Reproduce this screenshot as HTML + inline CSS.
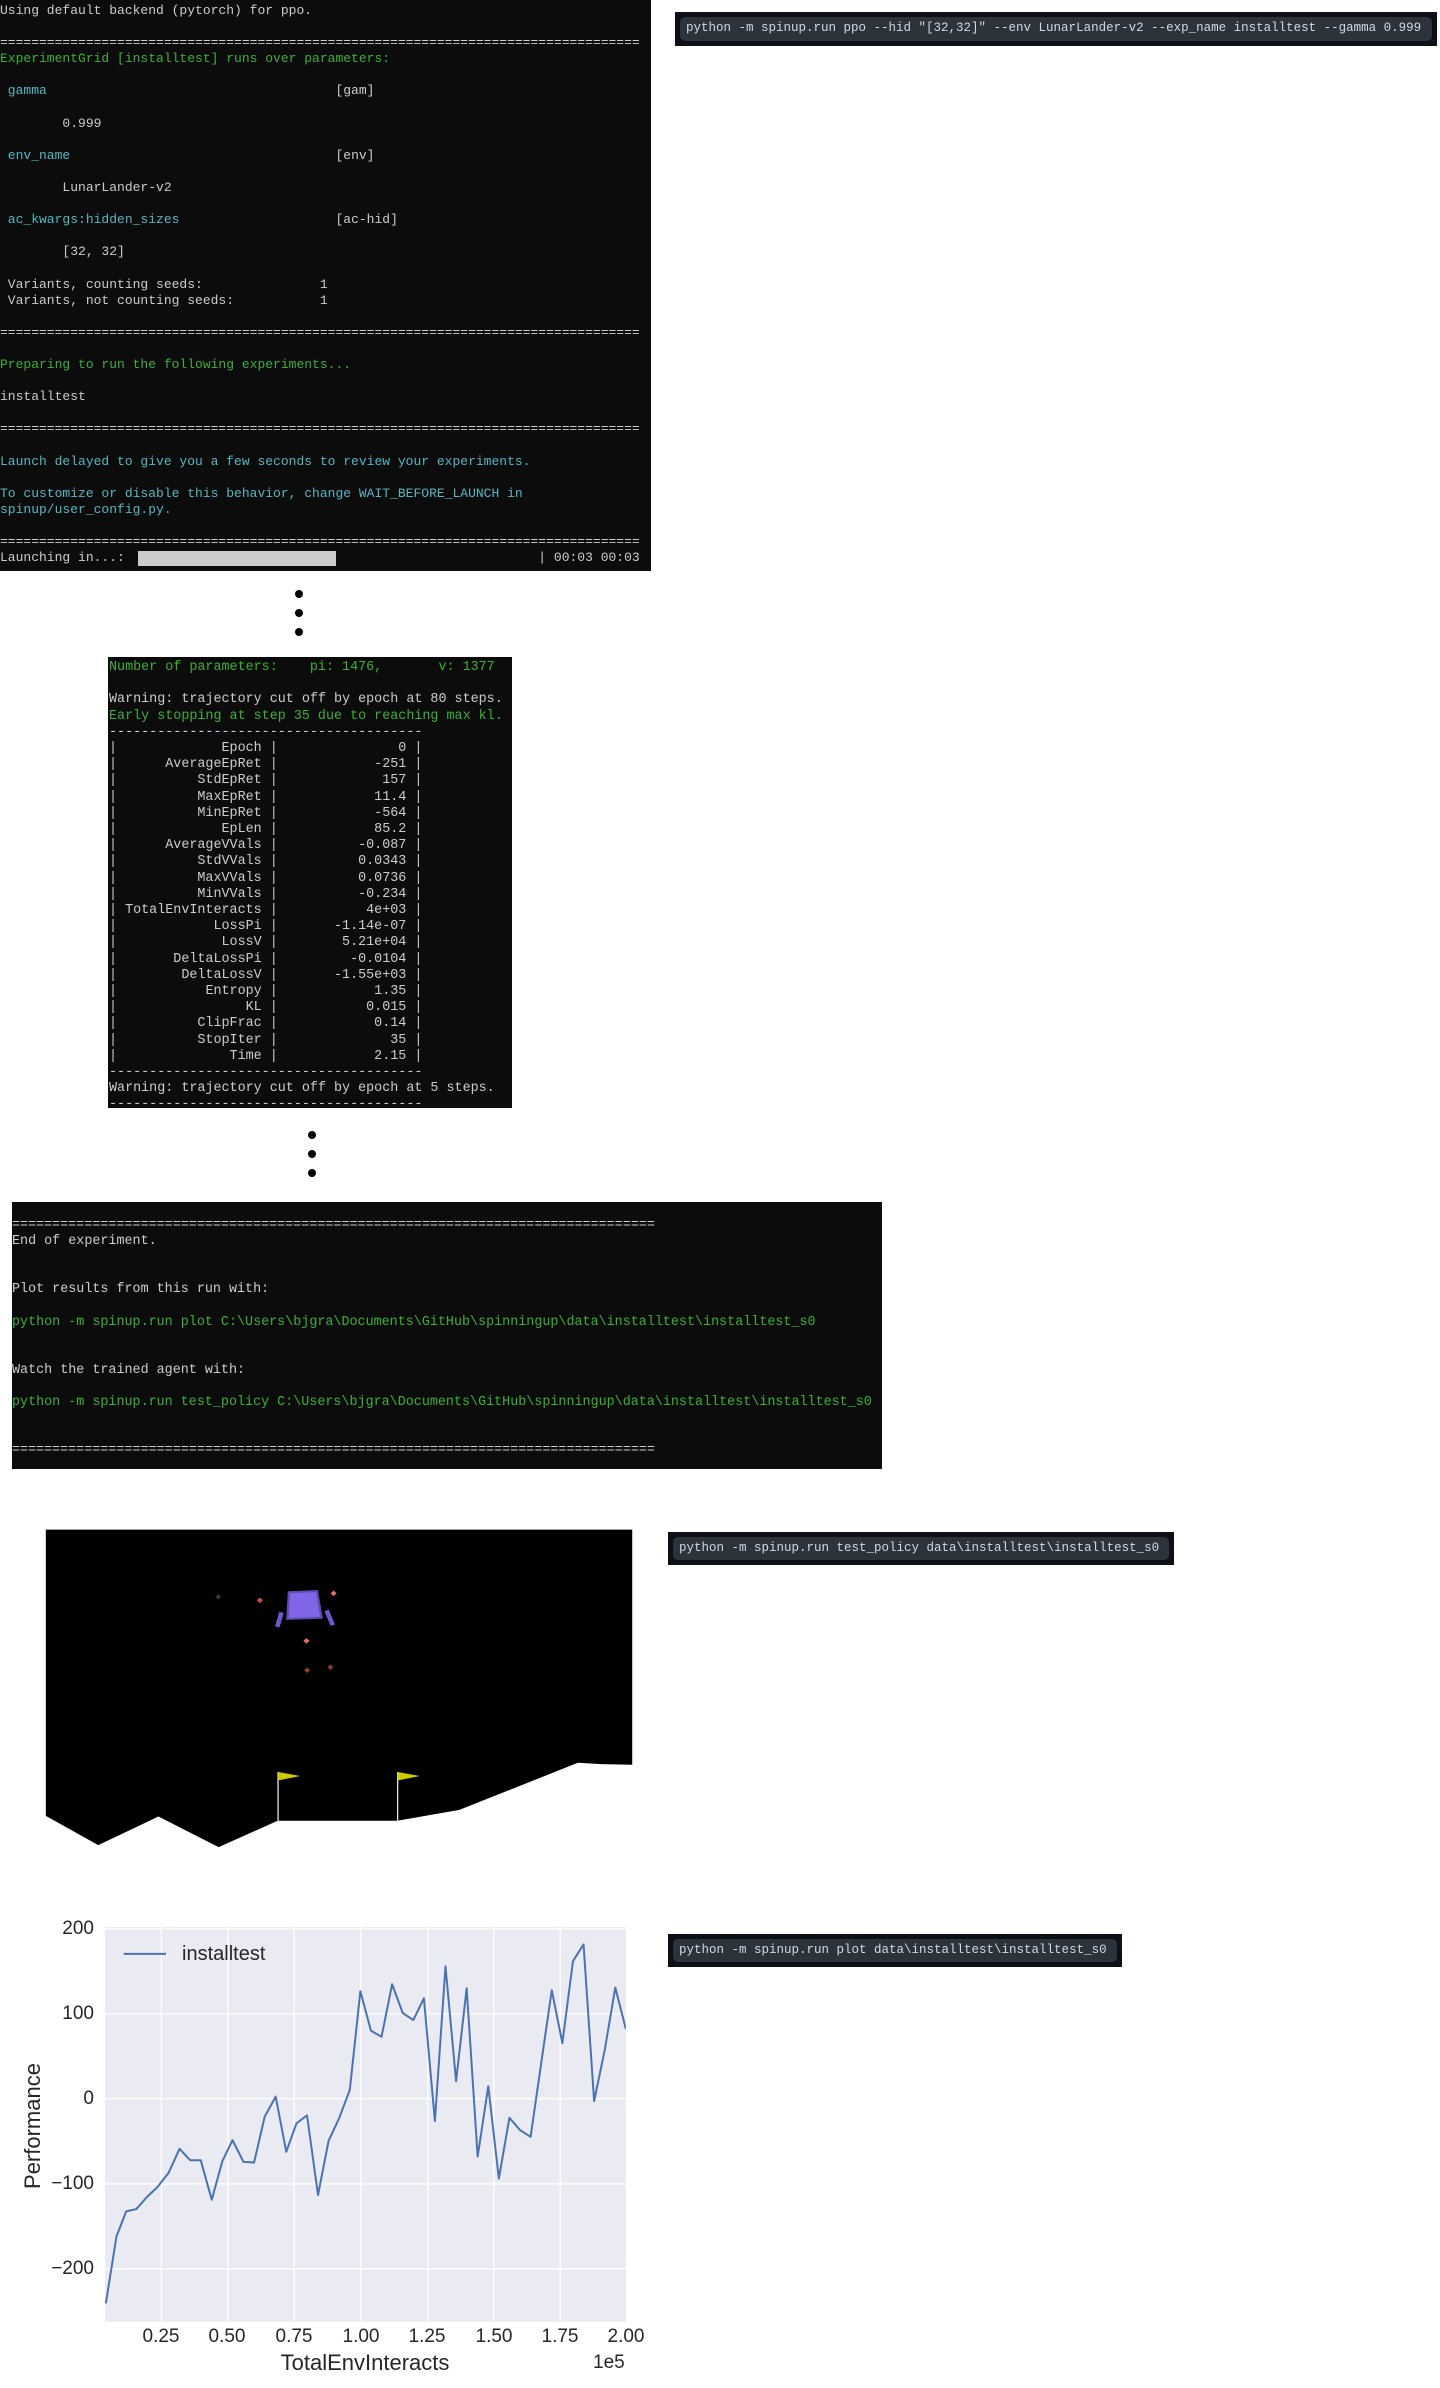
<!DOCTYPE html>
<html><head><meta charset="utf-8">
<style>
*{margin:0;padding:0;box-sizing:border-box}
body{width:1440px;height:2376px;background:#fff;position:relative;overflow:hidden;font-family:"Liberation Mono",monospace}
.term{position:absolute;background:#0c0c0c;color:#cccccc;white-space:pre;font-family:"Liberation Mono",monospace}
.g{color:#3fae3a}.c{color:#56b6c2}
.cmd{position:absolute;background:#0d1117}
.cmd div{position:absolute;left:5px;right:5px;top:5px;bottom:5px;background:#2d333b;border-radius:5px;color:#cdd9e5;font-size:12.5px;line-height:22px;padding-left:6px;white-space:pre}
.dot{position:absolute;width:8px;height:8px;border-radius:50%;background:#000}
.k{display:inline-block;width:18ch;text-align:right}
.v{display:inline-block;width:16ch;text-align:right}
.pt{position:absolute;font-family:"Liberation Sans",sans-serif;color:#262626;font-size:19px;line-height:1}
</style></head><body>

<div class="term" style="left:0;top:0;width:651px;height:571px;font-size:13px;line-height:16.1px;padding-top:3px">Using default backend (pytorch) for ppo.

==================================================================================
<span class="g">ExperimentGrid [installtest] runs over parameters:</span>

<span class="c"> gamma</span>                                     [gam]

        0.999

<span class="c"> env_name</span>                                  [env]

        LunarLander-v2

<span class="c"> ac_kwargs:hidden_sizes</span>                    [ac-hid]

        [32, 32]

 Variants, counting seeds:               1
 Variants, not counting seeds:           1

==================================================================================

<span class="g">Preparing to run the following experiments...</span>

installtest

==================================================================================

<span class="c">Launch delayed to give you a few seconds to review your experiments.</span>

<span class="c">To customize or disable this behavior, change WAIT_BEFORE_LAUNCH in</span>
<span class="c">spinup/user_config.py.</span>

==================================================================================
Launching in...:                                                     | 00:03 00:03</div>
<div style="position:absolute;left:138px;top:551px;width:198px;height:15px;background:#cccccc"></div>

<div class="cmd" style="left:675px;top:12px;width:762px;height:34px"><div>python -m spinup.run ppo --hid "[32,32]" --env LunarLander-v2 --exp_name installtest --gamma 0.999</div></div>

<div class="dot" style="left:295px;top:590px"></div>
<div class="dot" style="left:295px;top:609px"></div>
<div class="dot" style="left:295px;top:628px"></div>

<div class="term" style="left:108px;top:657px;width:404px;height:451px;font-size:13.4px;line-height:16.2px;padding-top:3px;padding-left:1px"><span class="g">Number of parameters:    pi: 1476,       v: 1377</span>

Warning: trajectory cut off by epoch at 80 steps.
<span class="g">Early stopping at step 35 due to reaching max kl.</span>
---------------------------------------
|<span class="k">Epoch</span> |<span class="v">0</span> |
|<span class="k">AverageEpRet</span> |<span class="v">-251</span> |
|<span class="k">StdEpRet</span> |<span class="v">157</span> |
|<span class="k">MaxEpRet</span> |<span class="v">11.4</span> |
|<span class="k">MinEpRet</span> |<span class="v">-564</span> |
|<span class="k">EpLen</span> |<span class="v">85.2</span> |
|<span class="k">AverageVVals</span> |<span class="v">-0.087</span> |
|<span class="k">StdVVals</span> |<span class="v">0.0343</span> |
|<span class="k">MaxVVals</span> |<span class="v">0.0736</span> |
|<span class="k">MinVVals</span> |<span class="v">-0.234</span> |
|<span class="k">TotalEnvInteracts</span> |<span class="v">4e+03</span> |
|<span class="k">LossPi</span> |<span class="v">-1.14e-07</span> |
|<span class="k">LossV</span> |<span class="v">5.21e+04</span> |
|<span class="k">DeltaLossPi</span> |<span class="v">-0.0104</span> |
|<span class="k">DeltaLossV</span> |<span class="v">-1.55e+03</span> |
|<span class="k">Entropy</span> |<span class="v">1.35</span> |
|<span class="k">KL</span> |<span class="v">0.015</span> |
|<span class="k">ClipFrac</span> |<span class="v">0.14</span> |
|<span class="k">StopIter</span> |<span class="v">35</span> |
|<span class="k">Time</span> |<span class="v">2.15</span> |
---------------------------------------
Warning: trajectory cut off by epoch at 5 steps.
---------------------------------------</div>

<div class="dot" style="left:308px;top:1131px"></div>
<div class="dot" style="left:308px;top:1150px"></div>
<div class="dot" style="left:308px;top:1169px"></div>

<div class="term" style="left:12px;top:1202px;width:870px;height:267px;font-size:13.4px;line-height:16.1px;padding-top:16px">================================================================================
End of experiment.


Plot results from this run with:

<span class="g">python -m spinup.run plot C:\Users\bjgra\Documents\GitHub\spinningup\data\installtest\installtest_s0</span>


Watch the trained agent with:

<span class="g">python -m spinup.run test_policy C:\Users\bjgra\Documents\GitHub\spinningup\data\installtest\installtest_s0</span>


================================================================================</div>

<svg style="position:absolute;left:40px;top:1528px" width="600" height="334" viewBox="0 0 1545 1013" preserveAspectRatio="none">
<polygon points="15,5 1525,5 1525,718 1445,716 1385,712 1080,855 920,888 612,888 460,968 305,875 150,962 15,873" fill="#000"/>
<line x1="613" y1="740" x2="613" y2="888" stroke="#fff" stroke-width="3"/>
<line x1="921" y1="740" x2="921" y2="888" stroke="#fff" stroke-width="3"/>
<polygon points="613,740 670,752 613,766" fill="#cccc00"/>
<polygon points="921,740 978,752 921,766" fill="#cccc00"/>
<polygon points="641,195 713,191 725,272 637,276" fill="#8066e6" stroke="#5a4cb0" stroke-width="6"/>
<line x1="622" y1="256" x2="611" y2="300" stroke="#6a5acd" stroke-width="12"/>
<line x1="738" y1="250" x2="754" y2="295" stroke="#6a5acd" stroke-width="12"/>
<g>
<polygon points="459,200 467,208 459,217 451,208" fill="#3a3030"/>
<polygon points="566,211 574,219 566,228 558,219" fill="#c85050"/>
<polygon points="756,190 764,198 756,207 748,198" fill="#e07070"/>
<polygon points="686,334 694,342 686,351 678,342" fill="#e07070"/>
<polygon points="688,423 696,431 688,440 680,431" fill="#8b3a3a"/>
<polygon points="748,414 756,422 748,431 740,422" fill="#7a3a3a"/>
</g>
</svg>

<div class="cmd" style="left:668px;top:1532px;width:506px;height:33px"><div>python -m spinup.run test_policy data\installtest\installtest_s0</div></div>
<div class="cmd" style="left:668px;top:1934px;width:454px;height:33px"><div>python -m spinup.run plot data\installtest\installtest_s0</div></div>

<svg style="position:absolute;left:0;top:1912px" width="664" height="476" viewBox="0 0 1568 1423" preserveAspectRatio="none">
<defs><clipPath id="ax"><rect x="248" y="45" width="1230" height="1180"/></clipPath></defs>
<rect x="248" y="45" width="1230" height="1180" fill="#eaeaf2"/>
<g stroke="#fff" stroke-width="1.3">
<line x1="248" x2="1478" y1="50" y2="50" vector-effect="non-scaling-stroke"/>
<line x1="248" x2="1478" y1="305" y2="305" vector-effect="non-scaling-stroke"/>
<line x1="248" x2="1478" y1="558" y2="558" vector-effect="non-scaling-stroke"/>
<line x1="248" x2="1478" y1="813" y2="813" vector-effect="non-scaling-stroke"/>
<line x1="248" x2="1478" y1="1067" y2="1067" vector-effect="non-scaling-stroke"/>
<line y1="45" y2="1225" x1="381" x2="381" vector-effect="non-scaling-stroke"/>
<line y1="45" y2="1225" x1="538" x2="538" vector-effect="non-scaling-stroke"/>
<line y1="45" y2="1225" x1="695" x2="695" vector-effect="non-scaling-stroke"/>
<line y1="45" y2="1225" x1="852" x2="852" vector-effect="non-scaling-stroke"/>
<line y1="45" y2="1225" x1="1010" x2="1010" vector-effect="non-scaling-stroke"/>
<line y1="45" y2="1225" x1="1166" x2="1166" vector-effect="non-scaling-stroke"/>
<line y1="45" y2="1225" x1="1323" x2="1323" vector-effect="non-scaling-stroke"/>
</g>
<polyline clip-path="url(#ax)" fill="none" stroke="#4c72b0" stroke-width="2" vector-effect="non-scaling-stroke" stroke-linejoin="round" points="250,1170 275,970 298,895 322,888 347,852 372,822 398,780 424,708 449,742 474,742 500,860 525,745 549,682 575,747 600,749 625,612 651,552 676,717 700,632 725,608 751,846 776,684 801,616 826,532 851,237 876,355 901,373 926,216 951,302 976,323 1001,258 1027,625 1052,162 1077,506 1102,228 1128,731 1153,521 1178,797 1203,615 1228,652 1253,672 1278,452 1303,234 1328,392 1353,147 1378,97 1403,565 1428,413 1453,226 1478,350"/>
<line x1="292" x2="392" y1="125" y2="125" stroke="#4c72b0" stroke-width="2" vector-effect="non-scaling-stroke"/>
</svg>
<div class="pt" style="left:182px;top:1944px;font-size:20px">installtest</div>
<div class="pt" style="left:30px;top:1919px;width:64px;text-align:right">200</div>
<div class="pt" style="left:30px;top:2004px;width:64px;text-align:right">100</div>
<div class="pt" style="left:30px;top:2089px;width:64px;text-align:right">0</div>
<div class="pt" style="left:30px;top:2174px;width:64px;text-align:right">−100</div>
<div class="pt" style="left:30px;top:2259px;width:64px;text-align:right">−200</div>
<div class="pt" style="left:131px;top:2327px;width:60px;text-align:center">0.25</div>
<div class="pt" style="left:197px;top:2327px;width:60px;text-align:center">0.50</div>
<div class="pt" style="left:264px;top:2327px;width:60px;text-align:center">0.75</div>
<div class="pt" style="left:331px;top:2327px;width:60px;text-align:center">1.00</div>
<div class="pt" style="left:397px;top:2327px;width:60px;text-align:center">1.25</div>
<div class="pt" style="left:464px;top:2327px;width:60px;text-align:center">1.50</div>
<div class="pt" style="left:530px;top:2327px;width:60px;text-align:center">1.75</div>
<div class="pt" style="left:596px;top:2327px;width:60px;text-align:center">2.00</div>
<div class="pt" style="left:215px;top:2352px;width:300px;text-align:center;font-size:22px">TotalEnvInteracts</div>
<div class="pt" style="left:593px;top:2353px">1e5</div>
<div class="pt" style="left:-37px;top:2115px;width:140px;text-align:center;font-size:22px;transform:rotate(-90deg)">Performance</div>

</body></html>
